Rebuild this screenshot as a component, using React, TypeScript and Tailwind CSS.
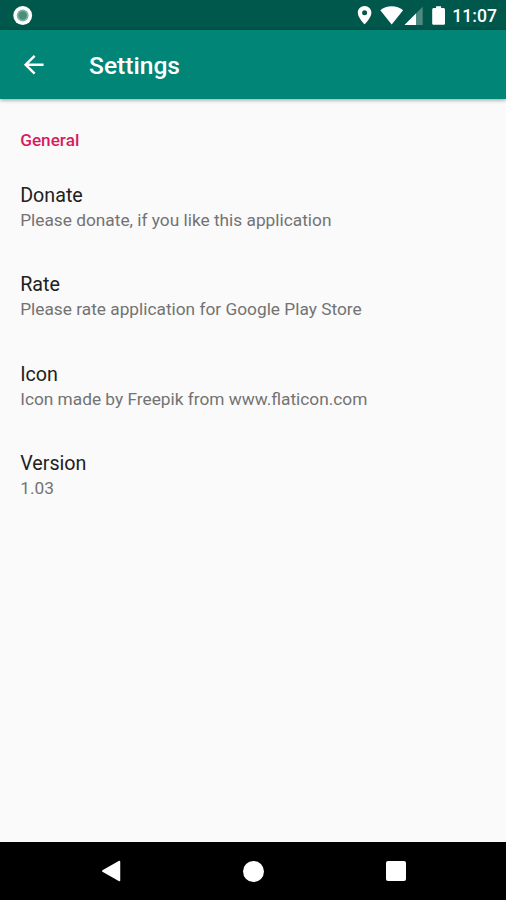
import React from "react";

interface Preference {
  title: string;
  summary: string;
}

const preferences: Preference[] = [
  { title: "Donate", summary: "Please donate, if you like this application" },
  { title: "Rate", summary: "Please rate application for Google Play Store" },
  { title: "Icon", summary: "Icon made by Freepik from www.flaticon.com" },
  { title: "Version", summary: "1.03" },
];

function StatusBar() {
  return (
    <div className="flex h-[30px] shrink-0 items-center justify-between bg-[#00574b] pl-3 pr-[9px]">
      <svg width="21" height="21" viewBox="0 0 21 21">
        <circle cx="10.7" cy="10.5" r="9.4" fill="#fff" />
        <circle cx="10.7" cy="10.5" r="5.9" fill="#7fb3a5" />
        <circle cx="10.7" cy="10.5" r="4.2" fill="#4a8f7c" />
      </svg>
      <div className="flex items-center gap-[7px]">
        <svg width="88" height="30" viewBox="357 0 88 30" fill="#fff">
          <path
            fillRule="evenodd"
            d="M364.6 6c-3.900 0-6.800 3-6.800 6.700 0 5 6.800 11.600 6.800 11.600s6.800-6.600 6.800-11.600c0-3.700-2.900-6.700-6.800-6.700zm0 4.200a2.500 2.500 0 1 1 0 5 2.500 2.500 0 0 1 0-5z"
          />
          <path d="M380.3 10.3C383.4 7.800 387.300 6.300 391.700 6.300s8.300 1.500 11.400 4L391.700 24.500z" />
          <path d="M422.700 6.700v18.200h-18.200z" fillOpacity=".3" />
          <path d="M416 13.400v11.500h-11.500z" />
          <path d="M443.400 8h-2.300V6.200h-5V8h-2.300c-.9 0-1.600.7-1.600 1.600v13.600c0 .9.700 1.600 1.600 1.600h9.600c.9 0 1.600-.7 1.600-1.600V9.600c0-.9-.7-1.600-1.600-1.600z" />
        </svg>
        <span className="pt-0.5 text-[17.600px] leading-[28px] font-medium text-white">11:07</span>
      </div>
    </div>
  );
}

function AppBar() {
  return (
    <header className="z-10 flex h-[69px] shrink-0 items-center bg-[#008577] pl-[19px] shadow-[0_1px_4px_rgba(0,0,0,0.4)]">
      <svg width="29.500" height="29.500" viewBox="0 0 24 24" fill="#fff">
        <path d="M20 11H7.830l5.590-5.590L12 4l-8 8 8 8 1.410-1.410L7.830 13H20v-2z" />
      </svg>
      <h1 className="ml-[40.500px] pt-[3px] text-[24.600px] leading-8 font-medium text-white">Settings</h1>
    </header>
  );
}

function NavigationBar() {
  return (
    <nav className="flex h-[58px] shrink-0 items-center justify-between bg-black pr-[100px] pl-[101px]">
      <svg width="20" height="22" viewBox="0 0 20 22">
        <path d="M18.500 1.500v19L1.800 11z" fill="#fff" stroke="#fff" strokeWidth="1.500" strokeLinejoin="round" />
      </svg>
      <div className="size-[21px] rounded-full bg-white" />
      <div className="size-5 rounded-[2px] bg-white" />
    </nav>
  );
}

export default function App() {
  return (
    <div className="flex h-[900px] w-[506px] flex-col overflow-hidden bg-[#fafafa] font-[Roboto,sans-serif]">
      <StatusBar />
      <AppBar />
      <main className="flex-1 px-[20.200px] pt-[30px]">
        <h2 className="text-[17.200px] leading-[22px] font-medium text-[#d81b60]">General</h2>
        <ul className="pt-8">
          {preferences.map((item) => (
            <li key={item.title} className="h-[89.330px]">
              <p className="text-[19.700px] leading-[26px] text-[#212121]">{item.title}</p>
              <p className="text-[17.300px] leading-[23px] text-[#737373]">{item.summary}</p>
            </li>
          ))}
        </ul>
      </main>
      <NavigationBar />
    </div>
  );
}
